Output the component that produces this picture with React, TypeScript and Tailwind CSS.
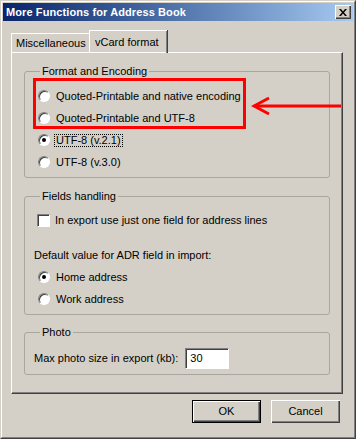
import React from "react";

const font = { fontFamily: '"Liberation Sans", Arial, sans-serif' };

function Radio({ checked = false }: { checked?: boolean }) {
  return (
    <span className="flex h-3 w-3 shrink-0 items-center justify-center rounded-full border border-t-[#808080] border-l-[#808080] border-r-white border-b-white bg-white shadow-[inset_1px_1px_0_#404040]">
      {checked && <span className="h-1 w-1 rounded-full bg-black" />}
    </span>
  );
}

function RadioRow({
  label,
  checked = false,
  focus = false,
}: {
  label: string;
  checked?: boolean;
  focus?: boolean;
}) {
  return (
    <div className="flex h-[22px] items-center gap-[4px] pl-[4px]">
      <Radio checked={checked} />
      <span
        className={
          focus
            ? "border border-dotted border-black px-[1px] leading-[11px]"
            : "border border-transparent px-[1px] leading-[11px]"
        }
      >
        {label}
      </span>
    </div>
  );
}

function Group({
  title,
  className,
  children,
}: {
  title: string;
  className?: string;
  children: React.ReactNode;
}) {
  return (
    <fieldset
      className={
        "rounded-[3px] border border-[#a8a69e] px-[9px] " + (className ?? "")
      }
    >
      <legend className="ml-[6px] px-[2px] leading-[13px]">{title}</legend>
      {children}
    </fieldset>
  );
}

function Button({ label, isDefault = false }: { label: string; isDefault?: boolean }) {
  return (
    <button
      type="button"
      className={
        "flex h-[23px] w-[69px] items-center justify-center bg-[#d4d0c8] " +
        (isDefault
          ? "border border-black shadow-[inset_1px_1px_0_#ffffff,inset_-1px_-1px_0_#404040,inset_-2px_-2px_0_#808080]"
          : "shadow-[inset_1px_1px_0_#ffffff,inset_-1px_-1px_0_#404040,inset_-2px_-2px_0_#808080]")
      }
    >
      {label}
    </button>
  );
}

export default function App() {
  return (
    <div
      className="relative h-[439px] w-[356px] overflow-hidden border border-t-[#d4d0c8] border-l-[#d4d0c8] border-r-[#404040] border-b-[#404040] bg-[#d4d0c8] text-[11px] text-black"
      style={font}
    >
      <div className="flex h-full flex-col border border-t-white border-l-white border-r-[#808080] border-b-[#808080] p-[1px]">
        {/* title bar */}
        <div className="flex h-[18px] items-center justify-between bg-gradient-to-r from-[#0a246a] to-[#a6caf0] pl-[3px] pr-[2px]">
          <span className="text-[11px] font-bold tracking-[0.1px] text-white">
            More Functions for Address Book
          </span>
          <span className="flex h-[14px] w-[16px] items-center justify-center bg-[#d4d0c8] shadow-[inset_1px_1px_0_#ffffff,inset_-1px_-1px_0_#404040,inset_-2px_-2px_0_#808080]">
            <svg width="8" height="7" viewBox="0 0 8 7">
              <path d="M0 0h2l2 2.5L6 0h2L5 3.5 8 7H6L4 4.5 2 7H0l3-3.5z" fill="#000" />
            </svg>
          </span>
        </div>

        {/* tabs */}
        <div className="mt-[9px] flex items-end pl-[8px]">
          <div className="flex h-[19px] w-[79px] items-center border-t border-l border-white pl-[4px]">
            Miscellaneous
          </div>
          <div className="relative z-10 -mb-[1px] -ml-[1px] flex h-[23px] w-[78px] items-start border-t border-l border-white pt-[3px] pl-[5px] shadow-[inset_-1px_0_0_#808080,1px_0_0_#404040]">
            vCard format
          </div>
        </div>

        {/* panel */}
        <div className="ml-[8px] flex h-[342px] w-[332px] flex-col border-t border-l border-white border-r border-r-[#404040] border-b border-b-[#404040] px-[12px] pt-[12px] shadow-[inset_-1px_-1px_0_#808080]">
          <Group title="Format and Encoding" className="pt-[7px] pb-[4px]">
            <RadioRow label="Quoted-Printable and native encoding" />
            <RadioRow label="Quoted-Printable and UTF-8" />
            <RadioRow label="UTF-8 (v.2.1)" checked focus />
            <RadioRow label="UTF-8 (v.3.0)" />
          </Group>

          <Group title="Fields handling" className="mt-[12px] pt-[6px] pb-[4px]">
            <div className="flex h-[22px] items-center gap-[5px] pl-[3px]">
              <span className="h-[13px] w-[13px] shrink-0 border border-t-[#808080] border-l-[#808080] border-r-white border-b-white bg-white shadow-[inset_1px_1px_0_#404040]" />
              <span>In export use just one field for address lines</span>
            </div>
            <div className="mt-[13px] flex h-[22px] items-center">
              Default value for ADR field in import:
            </div>
            <RadioRow label="Home address" checked />
            <RadioRow label="Work address" />
          </Group>

          <Group title="Photo" className="mt-[11px] pt-[8px] pb-[5px]">
            <div className="flex h-[22px] items-center gap-[7px]">
              <span>Max photo size in export (kb):</span>
              <span className="flex h-[21px] w-[44px] items-center border border-t-[#808080] border-l-[#808080] border-r-white border-b-white bg-white pl-[4px] shadow-[inset_1px_1px_0_#404040]">
                30
              </span>
            </div>
          </Group>
        </div>

        {/* buttons */}
        <div className="mt-[6px] flex justify-end gap-[10px] pr-[13px]">
          <Button label="OK" isDefault />
          <Button label="Cancel" />
        </div>
      </div>

      {/* red annotation */}
      <div className="absolute left-[32px] top-[77px] h-[51px] w-[213px] border-[3px] border-[#ff0000]" />
      <svg
        className="absolute left-[250px] top-[95px]"
        width="92"
        height="20"
        viewBox="0 0 92 20"
      >
        <path d="M90 10H3" stroke="#ff0000" strokeWidth="3" />
        <path d="M18 2L3 10l15 8" stroke="#ff0000" strokeWidth="3" fill="none" />
      </svg>
    </div>
  );
}
